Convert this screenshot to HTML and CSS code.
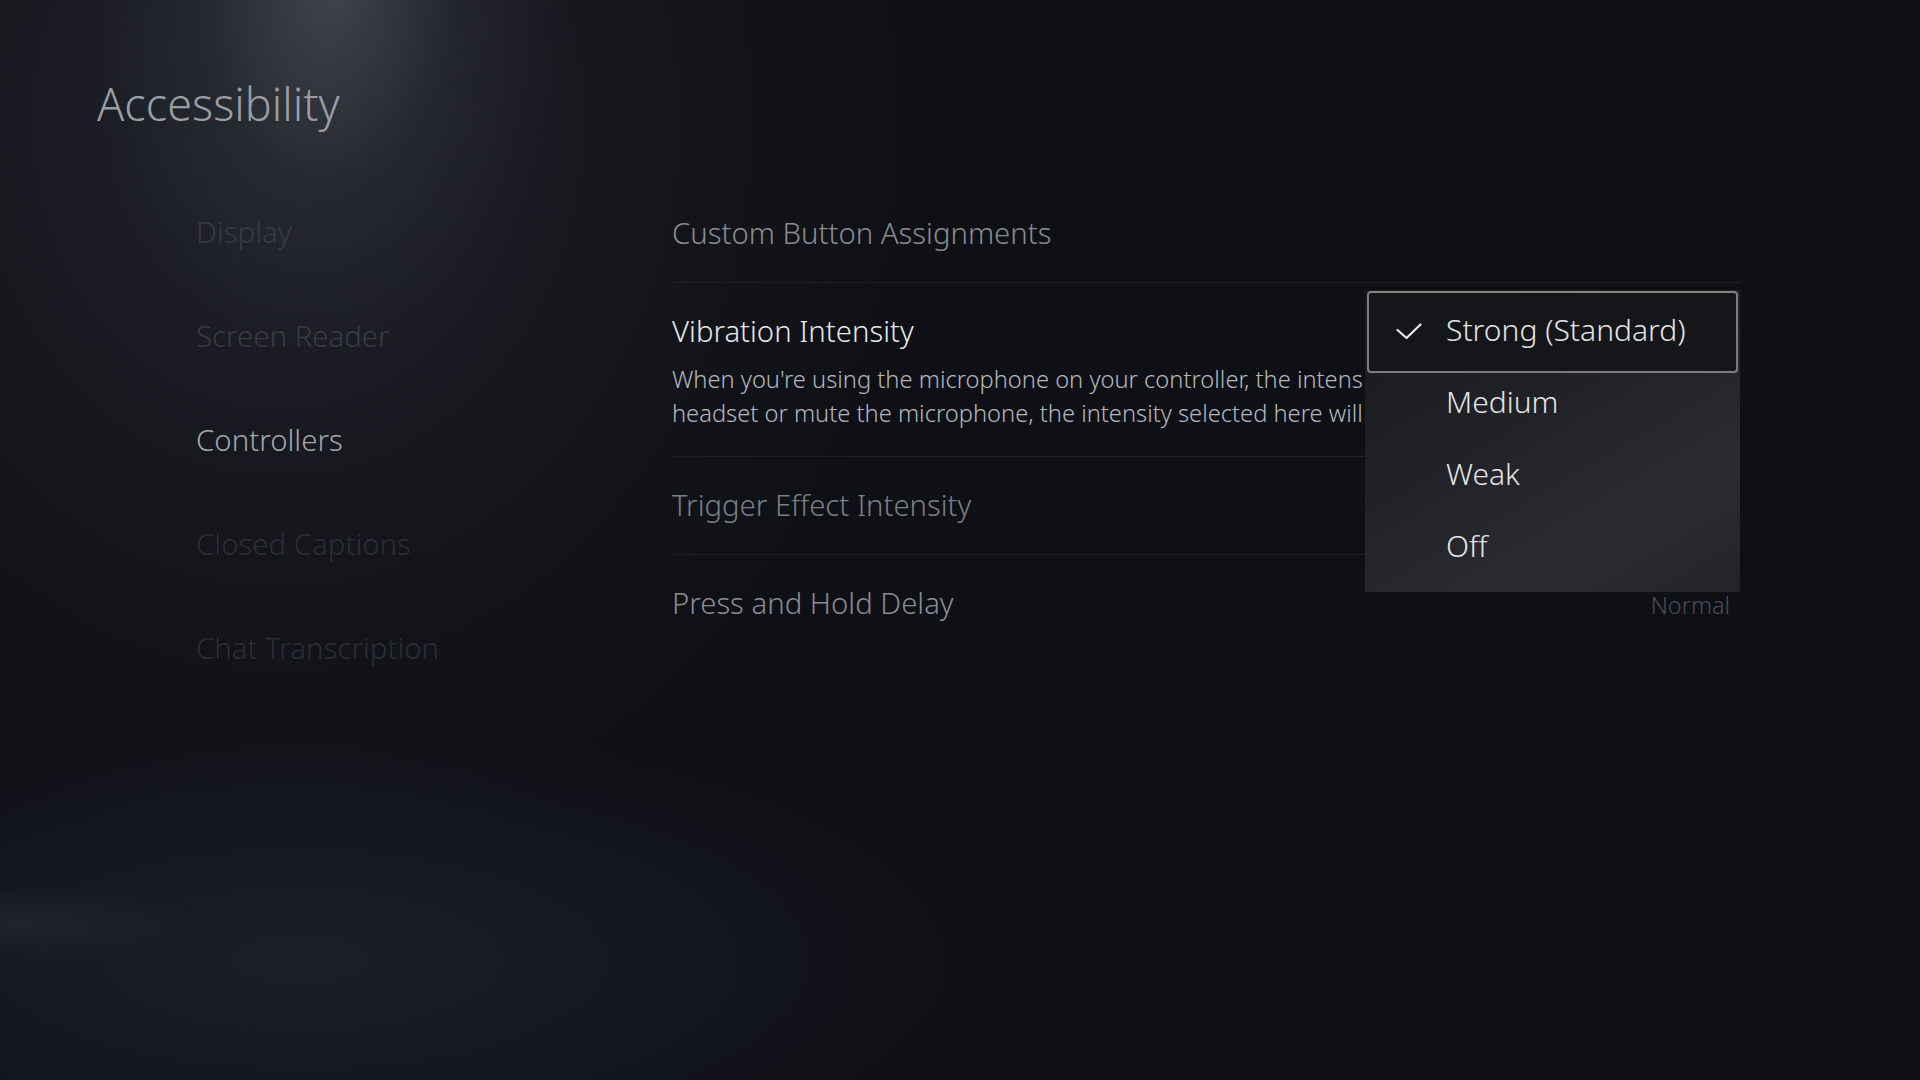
FILE: index.html
```html
<!DOCTYPE html>
<html lang="en">
<head>
    <meta charset="UTF-8">
    <meta name="viewport" content="width=device-width, initial-scale=1.0">
    <title>Accessibility - Controllers</title>
    <link rel="stylesheet" href="styles.css">
</head>
<body>
    <div class="screen">
        <h1 class="title">Accessibility</h1>

        <div class="layout">
            <ul class="sidebar">
                <li class="nav-item">Display</li>
                <li class="nav-item">Screen Reader</li>
                <li class="nav-item active">Controllers</li>
                <li class="nav-item faint">Closed Captions</li>
                <li class="nav-item faint">Chat Transcription</li>
            </ul>

            <div class="content">
                <div class="row">
                    <div class="row-title">Custom Button Assignments</div>
                </div>
                <div class="row focused">
                    <div class="row-title">Vibration Intensity</div>
                    <p class="row-desc">When you're using the microphone on your controller, the intensity of vibration will be lowered. When you use a<br>headset or mute the microphone, the intensity selected here will be applied.</p>
                </div>
                <div class="row">
                    <div class="row-title dim">Trigger Effect Intensity</div>
                </div>
                <div class="row split">
                    <div class="row-title">Press and Hold Delay</div>
                    <div class="row-value">Normal</div>
                </div>

                <ul class="dropdown">
                    <li class="option selected">
                        <svg class="check" width="26" height="18" viewBox="0 0 26 18">
                            <polyline points="1.5,7 10.5,15 24.5,1.5" fill="none" stroke="#e8e8ea" stroke-width="2.2" stroke-linecap="round" stroke-linejoin="round"/>
                        </svg>
                        <span class="label">Strong (Standard)</span>
                    </li>
                    <li class="option">Medium</li>
                    <li class="option">Weak</li>
                    <li class="option">Off</li>
                </ul>
            </div>
        </div>
    </div>
</body>
</html>
```

FILE: styles.css
```css
body {
    margin: 0;
    background: #0e1015;
    font-family: "Noto Sans", "Open Sans", sans-serif;
    font-weight: 300;
}
.screen {
    position: relative;
    width: 1920px;
    height: 1080px;
    overflow: hidden;
    background:
        radial-gradient(ellipse 240px 380px at 330px -20px, rgba(78, 80, 90, 0.75), rgba(50, 52, 60, 0.35) 55%, transparent 100%),
        radial-gradient(ellipse 650px 760px at 280px 120px, rgba(38, 40, 48, 0.85), rgba(26, 28, 35, 0.5) 55%, transparent 100%),
        radial-gradient(ellipse 900px 320px at 300px 960px, rgba(30, 36, 47, 0.75), transparent 75%),
        radial-gradient(ellipse 200px 40px at 20px 925px, rgba(50, 54, 64, 0.5), transparent 100%),
        #0e1015;
}
.title {
    margin: 0;
    padding: 76px 0 0 97px;
    font-size: 45px;
    line-height: 56px;
    font-weight: 300;
    color: #9b9da4;
}
.layout {
    display: flex;
    margin-top: 48px;
}
.sidebar {
    list-style: none;
    margin: 0;
    padding: 0 0 0 196px;
    width: 476px;
}
.nav-item {
    font-size: 29.4px;
    line-height: 104px;
    height: 104px;
    color: #383b43;
    white-space: nowrap;
}
.nav-item.active {
    color: #a4a6ac;
}
.nav-item.faint {
    color: #2b2e36;
}
.content {
    position: relative;
    width: 1068px;
    padding-top: 5px;
}
.row {
    padding: 28px 0 29px;
    border-bottom: 1px solid #1e2026;
}
.row:last-of-type {
    border-bottom: none;
}
.row.focused {
    padding-bottom: 26px;
}
.row-title {
    font-size: 29.3px;
    line-height: 40px;
    color: #8a8c92;
}
.row-title.dim {
    color: #7c7f85;
}
.focused .row-title {
    color: #e6e7e9;
}
.row-desc {
    width: 692px;
    margin: 11px 0 0;
    font-size: 23.7px;
    line-height: 34px;
    color: #b5b7bc;
    white-space: nowrap;
    overflow: hidden;
}
.split {
    display: flex;
    justify-content: space-between;
    align-items: baseline;
    padding-right: 10px;
}
.row-value {
    font-size: 23.5px;
    color: #4a4d54;
}
.dropdown {
    position: absolute;
    top: 110px;
    left: 693px;
    width: 375px;
    margin: 0;
    padding: 4px 0 10px;
    box-sizing: border-box;
    height: 302px;
    list-style: none;
    background: linear-gradient(150deg, #18191e 0%, #222328 45%, #2b2c31 75%, #232429 100%);
}
.option {
    position: relative;
    height: 72px;
    padding-left: 81px;
    font-size: 30px;
    line-height: 72px;
    color: #e4e4e6;
}
.option.selected::before {
    content: "";
    position: absolute;
    top: -3px;
    bottom: -7px;
    left: 2px;
    right: 2px;
    border: 2px solid #7f7b78;
    border-top-color: #8c8279;
    border-radius: 4px;
    background: #15161a;
}
.label {
    position: relative;
}
.check {
    position: absolute;
    z-index: 1;
    left: 31px;
    top: 29px;
}
```
